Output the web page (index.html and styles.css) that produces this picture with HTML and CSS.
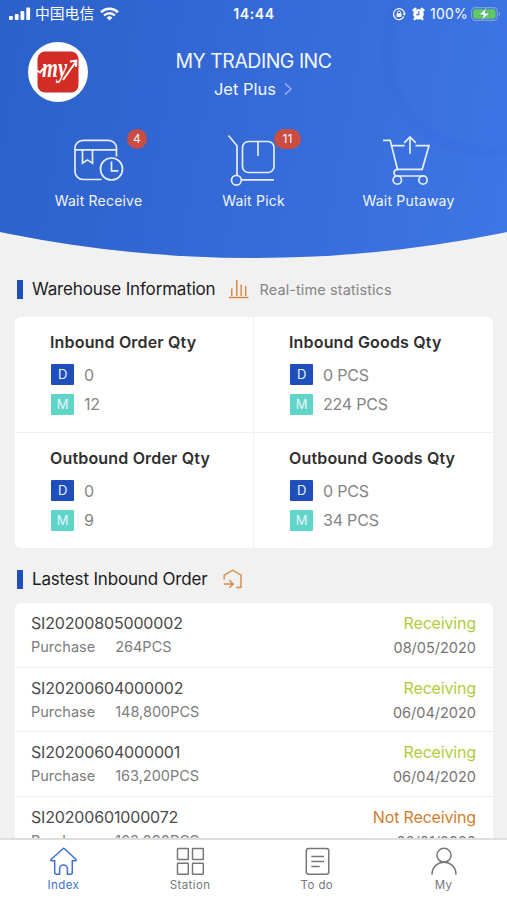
FILE: index.html
```html
<!DOCTYPE html>
<html lang="en">
<head>
    <meta charset="UTF-8">
    <meta name="viewport" content="width=device-width, initial-scale=1.0">
    <title>Index</title>
    <link rel="stylesheet" href="styles.css">
</head>
<body>
    <div class="app">
        <header class="hero">
            <div class="status-bar">
                <div class="status-left">
                    <svg class="signal" width="22" height="14" viewBox="0 0 22 14" fill="#fff">
                        <rect x="0" y="9" width="3.8" height="4" rx="1"/>
                        <rect x="5.8" y="7" width="3.8" height="6" rx="1"/>
                        <rect x="11.5" y="4" width="3.8" height="9" rx="1"/>
                        <rect x="17.3" y="0.5" width="3.8" height="12.5" rx="1"/>
                    </svg>
                    <span class="carrier">中国电信</span>
                    <svg class="wifi" width="19" height="14" viewBox="0 0 19 14" fill="none" stroke="#fff">
                        <path d="M1 5.2a12.2 12.2 0 0 1 17 0" stroke-width="2.6"/>
                        <path d="M4.1 8.5a7.7 7.7 0 0 1 10.8 0" stroke-width="2.4"/>
                        <path d="M9.5 13.6 6.6 10.8a4.1 4.1 0 0 1 5.8 0z" fill="#fff" stroke="none"/>
                    </svg>
                </div>
                <span class="clock">14:44</span>
                <div class="status-right">
                    <svg width="14" height="14" viewBox="0 0 14 14" fill="none" stroke="#fff">
                        <path d="M11.9 9.6a5.5 5.5 0 1 1 .6-2.6" stroke-width="1.2"/>
                        <path d="M10.6 6.4h3.4l-1.7 2.4z" fill="#fff" stroke="none"/>
                        <rect x="4.5" y="6.3" width="5" height="3.8" rx=".6" fill="#fff" stroke="none"/>
                        <path d="M5.5 6.5V5.4a1.5 1.5 0 0 1 3 0v1.1" stroke-width="1"/>
                    </svg>
                    <svg class="alarm" width="13" height="14" viewBox="0 0 13 14">
                        <circle cx="6.5" cy="7.3" r="5.3" fill="#fff"/>
                        <path d="M1.4 3.4 3.4 1.7M11.600 3.400 9.600 1.700M2.500 12.300l1.300-1.300M10.500 12.300l-1.300-1.300" stroke="#fff" stroke-width="2.200" stroke-linecap="round"/>
                        <path d="M6.8 4.2v3.4H4.2" fill="none" stroke="#3a6cd9" stroke-width="1.1"/>
                    </svg>
                    <span class="percent">100%</span>
                    <svg class="battery" width="30" height="14" viewBox="0 0 30 14">
                        <rect x=".6" y=".6" width="25.6" height="12.8" rx="3.6" fill="none" stroke="#7f9fdc" stroke-width="1.1"/>
                        <rect x="2.2" y="2.2" width="22.4" height="9.6" rx="2.2" fill="#5ecb5c"/>
                        <path d="M27.8 4.8v4.4a2.4 2.4 0 0 0 0-4.4z" fill="#7f9fdc"/>
                        <path d="M15.500.8 7.500 8h4.700l-1.600 5.400L19 6h-4.900z" fill="#fff" stroke="#4b9a8a" stroke-width=".8"/>
                    </svg>
                </div>
            </div>

            <div class="profile">
                <div class="avatar">
                    <svg width="42" height="42" viewBox="0 0 42 42">
                        <rect x=".5" y=".5" width="41" height="41" rx="7.5" fill="#d32b25"/>
                        <text class="logo-text" x="5" y="26" textLength="25" lengthAdjust="spacingAndGlyphs">my</text>
                        <path d="M0 19.500 3 21.500 6.500 17.500M26 29 39 10.500M33 10.500l6.300-.8-.3 6.300" fill="none" stroke="#fff" stroke-width="2"/>
                    </svg>
                </div>
                <div class="company">
                    <h1>MY TRADING INC</h1>
                    <div class="site">
                        <span>Jet Plus</span>
                        <svg width="9" height="14" viewBox="0 0 9 14" fill="none" stroke="#9cb9f2" stroke-width="1.3">
                            <path d="m1 1.5 6.2 5.5L1 12.5"/>
                        </svg>
                    </div>
                </div>
            </div>

            <nav class="actions">
                <div class="action">
                    <svg width="60" height="54" viewBox="0 0 60 54" class="action-icon">
                        <path d="M47.500 22.500v-8.200a8 8 0 0 0-8-8H14a8 8 0 0 0-8 8V37.500a8 8 0 0 0 8 8H32.500M6 15.800H47.500"/>
                        <path d="M13.500 15.800v13.400l5-3.300 5 3.300V15.800"/>
                        <circle cx="42.500" cy="35" r="11"/>
                        <path d="M42.500 27.500v9.300h6.800"/>
                    </svg>
                    <span class="badge">4</span>
                    <span class="action-label">Wait Receive</span>
                </div>
                <div class="action">
                    <svg width="60" height="54" viewBox="0 0 60 54" class="action-icon">
                        <path d="m4.500 1.500 8.500 10.300v29.500"/>
                        <circle cx="12.400" cy="46.300" r="4.900"/>
                        <rect x="18.500" y="7.500" width="31.500" height="31" rx="6"/>
                        <path d="M34 7.500V22M17.300 45.800H50"/>
                    </svg>
                    <span class="badge badge-wide">11</span>
                    <span class="action-label">Wait Pick</span>
                </div>
                <div class="action">
                    <svg width="60" height="54" viewBox="0 0 60 54" class="action-icon">
                        <path d="M4 6.300h7.200L18.500 35.300h24.700l6.800-23.600H36.500M12.600 11.700h13"/>
                        <path d="M18.500 35.300c-5 .8-4.500 6.700.5 6.700h26"/>
                        <circle cx="18.300" cy="46" r="4.200"/>
                        <circle cx="44" cy="46" r="4.200"/>
                        <path d="M31 19.800V3.500M25.200 8.800 31 3l5.800 5.800"/>
                    </svg>
                    <span class="action-label">Wait Putaway</span>
                </div>
            </nav>
        </header>

        <main class="content">
            <div class="section-title">
                <h2>Warehouse Information</h2>
                <svg class="chart-icon" width="20" height="20" viewBox="0 0 20 20" fill="none" stroke="#d48a45" stroke-width="1.500">
                    <path d="M0 18.500h19.500M2.800 17V9.500M7.800 17V1M12.200 17V5.500M16.700 17V7"/>
                </svg>
                <span class="subtitle">Real-time statistics</span>
            </div>

            <section class="card stats">
                <div class="stat">
                    <h3>Inbound Order Qty</h3>
                    <div class="stat-row"><span class="tag day">D</span><span>0</span></div>
                    <div class="stat-row"><span class="tag month">M</span><span>12</span></div>
                </div>
                <div class="stat">
                    <h3>Inbound Goods Qty</h3>
                    <div class="stat-row"><span class="tag day">D</span><span>0 PCS</span></div>
                    <div class="stat-row"><span class="tag month">M</span><span>224 PCS</span></div>
                </div>
                <div class="stat">
                    <h3>Outbound Order Qty</h3>
                    <div class="stat-row"><span class="tag day">D</span><span>0</span></div>
                    <div class="stat-row"><span class="tag month">M</span><span>9</span></div>
                </div>
                <div class="stat">
                    <h3>Outbound Goods Qty</h3>
                    <div class="stat-row"><span class="tag day">D</span><span>0 PCS</span></div>
                    <div class="stat-row"><span class="tag month">M</span><span>34 PCS</span></div>
                </div>
            </section>

            <div class="section-title section-orders">
                <h2>Lastest Inbound Order</h2>
                <svg class="inbound-icon" width="20" height="20" viewBox="0 0 20 20" fill="none" stroke="#d48a45" stroke-width="1.400">
                    <path d="M1.200 10.500V6.200L9.800 1.200l8.200 5v12.300h-4.700"/>
                    <path d="M.800 15h9M6.300 11.200l3.900 3.800-3.900 3.800"/>
                </svg>
            </div>

            <section class="card orders">
                <div class="order">
                    <div>
                        <div class="order-no">SI20200805000002</div>
                        <div class="order-info"><span>Purchase</span><span>264PCS</span></div>
                    </div>
                    <div class="order-side">
                        <div class="order-status receiving">Receiving</div>
                        <div class="order-date">08/05/2020</div>
                    </div>
                </div>
                <div class="order">
                    <div>
                        <div class="order-no">SI20200604000002</div>
                        <div class="order-info"><span>Purchase</span><span>148,800PCS</span></div>
                    </div>
                    <div class="order-side">
                        <div class="order-status receiving">Receiving</div>
                        <div class="order-date">06/04/2020</div>
                    </div>
                </div>
                <div class="order">
                    <div>
                        <div class="order-no">SI20200604000001</div>
                        <div class="order-info"><span>Purchase</span><span>163,200PCS</span></div>
                    </div>
                    <div class="order-side">
                        <div class="order-status receiving">Receiving</div>
                        <div class="order-date">06/04/2020</div>
                    </div>
                </div>
                <div class="order">
                    <div>
                        <div class="order-no">SI20200601000072</div>
                        <div class="order-info"><span>Purchase</span><span>163,200PCS</span></div>
                    </div>
                    <div class="order-side">
                        <div class="order-status not-receiving">Not Receiving</div>
                        <div class="order-date">06/01/2020</div>
                    </div>
                </div>
            </section>
        </main>

        <nav class="tab-bar">
            <div class="tab active">
                <svg width="30" height="30" viewBox="0 0 30 30">
                    <path d="M15.500 2.300 3 13.500c-.5.800 0 1.300.8 1.300h2.900v11.500c0 1.200.8 2 2 2h2.900v-5.500a3.900 3.900 0 0 1 7.800 0v5.500h2.900c1.200 0 2-.8 2-2V14.800h2.900c.8 0 1.300-.5.800-1.300L16.800 3q-.7-.7-1.300-.7z"/>
                </svg>
                <span>Index</span>
            </div>
            <div class="tab">
                <svg width="30" height="30" viewBox="0 0 30 30">
                    <rect x="2.500" y="2.500" width="10.800" height="11" rx=".5"/>
                    <rect x="17.500" y="2.500" width="10.800" height="11" rx=".5"/>
                    <rect x="2.500" y="17.300" width="10.800" height="11" rx=".5"/>
                    <rect x="17.500" y="17.300" width="10.800" height="11" rx=".5"/>
                </svg>
                <span>Station</span>
            </div>
            <div class="tab">
                <svg width="30" height="30" viewBox="0 0 30 30">
                    <rect x="4.300" y="2.500" width="22.500" height="25.800" rx="2.500"/>
                    <path d="M9.300 10.500h12.700M9.300 15.500h12.700M9.300 20.500h8.400"/>
                </svg>
                <span>To do</span>
            </div>
            <div class="tab">
                <svg width="30" height="30" viewBox="0 0 30 30">
                    <circle cx="15" cy="9.200" r="7"/>
                    <path d="M3 28.800c0-16.800 24-16.800 24 0"/>
                </svg>
                <span>My</span>
            </div>
        </nav>
    </div>
</body>
</html>
```
FILE: styles.css
```css
:root {
    --blue: #1f4fbb;
    --teal: #5fd5c8;
    --orange: #cf7d2e;
    --green: #b0cc3c;
    --line: #f0f0f0;
}

* {
    box-sizing: border-box;
}

body {
    margin: 0;
    font-family: Inter, "Noto Sans CJK SC", sans-serif;
    color: #1c1c1c;
}

h1, h2, h3 {
    margin: 0;
    font-weight: 400;
}

svg {
    display: block;
    flex: none;
}

.app {
    display: flex;
    flex-direction: column;
    height: 900px;
    overflow: hidden;
    background-color: #f1f1f1;
}

/* header */
.hero {
    position: relative;
    flex: none;
    height: 258px;
    color: #f2f6ff;
    background: linear-gradient(100deg, #2c61cb 0%, #3469d6 45%, #3e76e5 100%);
    clip-path: circle(1249px at 50% -991px);
}

/* faint ring in the corner */
.hero::after {
    content: "";
    position: absolute;
    top: -55px;
    left: 381px;
    width: 190px;
    height: 190px;
    border: 11px solid rgba(20, 60, 160, 0.035);
    border-radius: 50%;
}

.status-bar {
    display: grid;
    grid-template-columns: 1fr auto 1fr;
    align-items: center;
    height: 28px;
    padding: 0 6px 0 9px;
    color: #fff;
    line-height: 28px;
}

.status-left,
.status-right {
    display: flex;
    align-items: center;
}

.status-right {
    justify-content: flex-end;
}

.carrier {
    margin: 0 6px 0 4px;
    font-size: 14.8px;
}

.clock {
    margin-right: 2px;
    font-size: 14px;
    font-weight: 600;
    letter-spacing: 0.6px;
}

.alarm {
    margin: 0 5px 0 6px;
}

.percent {
    font-size: 14px;
    letter-spacing: 0.2px;
}

.battery {
    margin-left: 3px;
}

.profile {
    display: grid;
    grid-template-columns: 60px 1fr 60px;
    padding: 14px 28px 0;
}

.avatar {
    display: flex;
    align-items: center;
    justify-content: center;
    width: 60px;
    height: 60px;
    border-radius: 50%;
    background-color: #fff;
}

.logo-text {
    font: italic bold 27px "Liberation Serif", serif;
    fill: #fff;
}

.company {
    padding-top: 5px;
    text-align: center;
}

.company h1 {
    font-size: 19.5px;
    line-height: 28px;
    letter-spacing: -0.5px;
}

.site {
    display: flex;
    align-items: center;
    justify-content: center;
    gap: 8px;
    font-size: 16.5px;
    line-height: 28px;
}

.actions {
    display: grid;
    grid-template-columns: repeat(3, 1fr);
    padding: 31px 21px 0;
}

.action {
    position: relative;
    display: flex;
    flex-direction: column;
    align-items: center;
}

.action-icon {
    fill: none;
    stroke: #e6eeff;
    stroke-width: 1.7;
}

.action-label {
    margin-top: 3px;
    font-size: 14px;
    line-height: 20px;
    letter-spacing: 0.2px;
}

.badge {
    position: absolute;
    top: -5px;
    left: 106px;
    min-width: 20px;
    height: 20px;
    border-radius: 10px;
    background-color: #cb4c40;
    font-size: 12px;
    line-height: 20px;
    text-align: center;
}

.badge-wide {
    left: 98px;
    width: 27px;
}

/* content */
.content {
    flex: 1;
    min-height: 0;
    overflow: hidden;
    padding: 17px 14px 0 15px;
}

.section-title {
    display: flex;
    align-items: center;
    height: 28px;
    padding-left: 2px;
}

.section-title::before {
    content: "";
    width: 6px;
    height: 19px;
    margin-right: 9px;
    background-color: var(--blue);
}

.section-title h2 {
    font-size: 17px;
    letter-spacing: -0.17px;
}

.chart-icon {
    margin-left: 14px;
}

.subtitle {
    margin-left: 10px;
    color: #858585;
    font-size: 14.5px;
    letter-spacing: 0.1px;
}

.section-orders {
    margin-top: 17px;
}

.inbound-icon {
    margin-left: 15px;
}

.card {
    border-radius: 6px;
    background-color: #fff;
}

.stats {
    display: grid;
    grid-template-columns: 239px 1fr;
    grid-template-rows: 116px 115px;
    margin-top: 14px;
}

.stat {
    padding: 13px 0 0 35px;
}

.stat:nth-child(odd) {
    border-right: 1px solid var(--line);
}

.stat:nth-child(-n+2) {
    border-bottom: 1px solid var(--line);
}

.stat h3 {
    margin-bottom: 6px;
    color: #303030;
    font-size: 16px;
    font-weight: 600;
    line-height: 24px;
    letter-spacing: 0.17px;
}

.stat-row {
    display: flex;
    align-items: center;
    gap: 10px;
    height: 29.5px;
    padding-left: 1px;
    color: #858585;
    font-size: 16px;
    letter-spacing: -0.2px;
}

.tag {
    width: 23px;
    height: 21px;
    border-radius: 1px;
    color: #e8f4ff;
    font-size: 13px;
    line-height: 21px;
    text-align: center;
}

.day {
    background-color: var(--blue);
}

.month {
    background-color: var(--teal);
}

.orders {
    margin-top: 10px;
}

.order {
    display: flex;
    justify-content: space-between;
    height: 64.7px;
    padding: 8px 17px 0 16px;
    border-bottom: 1px solid var(--line);
}

.order-no,
.order-status {
    font-size: 16px;
    line-height: 24px;
    letter-spacing: -0.16px;
}

.order-no {
    color: #4a4a4a;
}

.order-info {
    display: flex;
    gap: 20px;
    color: #7c7c7c;
    font-size: 14.5px;
    line-height: 24px;
}

.order-side {
    text-align: right;
}

.order-date {
    color: #757575;
    font-size: 14.5px;
    line-height: 26px;
}

.receiving {
    color: var(--green);
}

.not-receiving {
    color: var(--orange);
}

/* bottom tabs */
.tab-bar {
    display: grid;
    grid-template-columns: repeat(4, 1fr);
    flex: none;
    height: 62px;
    border-top: 2px solid #dedede;
    background-color: #fff;
}

.tab {
    display: flex;
    flex-direction: column;
    align-items: center;
    padding-top: 6px;
    color: #777;
    font-size: 11.5px;
    line-height: 16px;
    letter-spacing: 0.4px;
}

.tab svg {
    margin-bottom: 1px;
    fill: none;
    stroke: currentColor;
    stroke-width: 1.5;
}

.tab.active {
    color: #416fd4;
}
```
